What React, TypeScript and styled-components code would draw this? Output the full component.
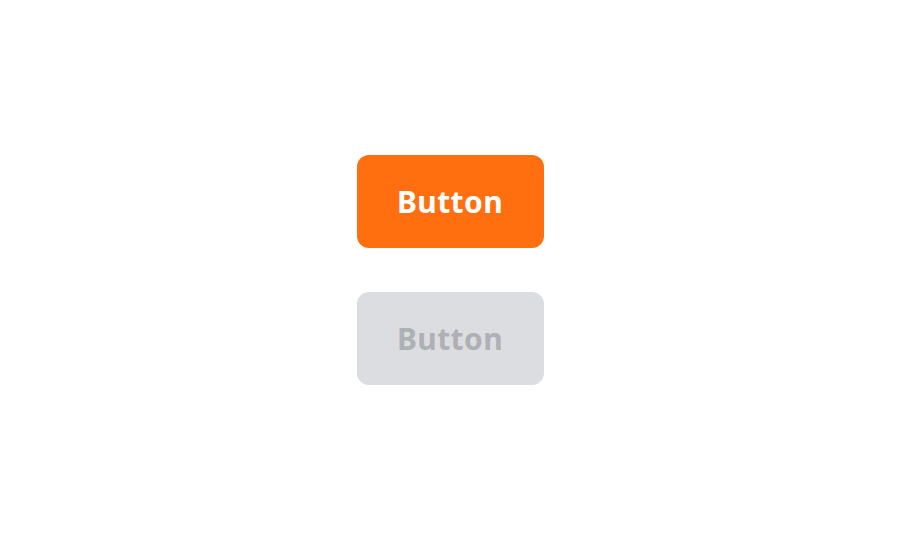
import React from "react";
import styled, { createGlobalStyle } from "styled-components";

const Global = createGlobalStyle`
  html, body { margin: 0; padding: 0; background: #ffffff; }
  body { font-family: "Noto Sans", sans-serif; }
`;

const Page = styled.div`
  width: 900px;
  height: 540px;
  display: flex;
  flex-direction: column;
  align-items: center;
  justify-content: center;
  gap: 44px;
`;

const Button = styled.button<{ $disabled?: boolean }>`
  width: 187px;
  height: 93px;
  border: none;
  border-radius: 12px;
  font-family: "Noto Sans", sans-serif;
  font-weight: 700;
  font-size: 30px;
  letter-spacing: 0.4px;
  line-height: 1;
  padding: 0;
  background: ${(p) => (p.$disabled ? "#DCDDE1" : "#FF6F0F")};
  color: ${(p) => (p.$disabled ? "#AEB0B6" : "#FFFFFF")};
  cursor: ${(p) => (p.$disabled ? "default" : "pointer")};
`;

export default function App() {
  return (
    <>
      <Global />
      <Page>
        <Button>Button</Button>
        <Button $disabled disabled>Button</Button>
      </Page>
    </>
  );
}
